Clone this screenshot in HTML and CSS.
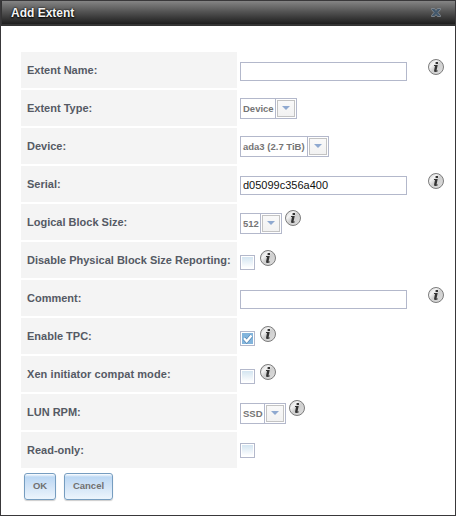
FILE: index.html
```
<!DOCTYPE html>
<html lang="en">
<head>
<meta charset="utf-8">
<title>Add Extent</title>
<link rel="stylesheet" href="styles.css">
</head>
<body>
<svg width="0" height="0" class="defs" aria-hidden="true">
  <defs>
    <linearGradient id="disc" x1="0" y1="0" x2="1" y2="1">
      <stop offset="0" stop-color="#bdbdbd"/><stop offset=".3" stop-color="#f4f4f4"/><stop offset=".5" stop-color="#cfcfcf"/><stop offset="1" stop-color="#dedede"/>
    </linearGradient>
    <symbol id="info" viewBox="0 0 16 16">
      <circle cx="8" cy="8" r="7.5" fill="url(#disc)" stroke="#7c7c7c" stroke-width="1"/>
      <rect x="7.6" y="3" width="2.4" height="2" fill="#333"/>
      <path d="M6 6h3.7L8.5 11.4h1.3v.8Q8.700 13 7.300 13 5.700 13 6.100 11.400L7 7.100H6z" fill="#333"/>
    </symbol>
  </defs>
</svg>
<div class="dialog">
  <header class="titlebar">
    <h1>Add Extent</h1>
    <svg class="close" viewBox="0 0 10 9"><path d="M.5.5h3L5 2.400 6.500.5h3v1L7 4.500l2.500 3v1h-3L5 6.600 3.500 8.500h-3v-1L3 4.500.5 1.500z" fill="#43586c" stroke="#8a8f96" stroke-width=".8"/></svg>
  </header>
  <form class="form">
    <div class="row"><label>Extent Name:</label><div class="field text"><input type="text"><svg class="info"><use href="#info"/></svg></div></div>
    <div class="row"><label>Extent Type:</label><div class="field choice"><div class="select device"><span>Device</span><i></i></div></div></div>
    <div class="row"><label>Device:</label><div class="field choice"><div class="select disk"><span>ada3 (2.7 TiB)</span><i></i></div></div></div>
    <div class="row"><label>Serial:</label><div class="field text"><input type="text" value="d05099c356a400"><svg class="info"><use href="#info"/></svg></div></div>
    <div class="row"><label>Logical Block Size:</label><div class="field choice hinted"><div class="select block"><span>512</span><i></i></div><svg class="info"><use href="#info"/></svg></div></div>
    <div class="row"><label>Disable Physical Block Size Reporting:</label><div class="field check"><div class="box"><b></b></div><svg class="info"><use href="#info"/></svg></div></div>
    <div class="row"><label>Comment:</label><div class="field text"><input type="text"><svg class="info"><use href="#info"/></svg></div></div>
    <div class="row"><label>Enable TPC:</label><div class="field check"><div class="box checked"><b><svg viewBox="0 0 11 11"><path d="M2 5.300l2.700 3L9.500 2.500" fill="none" stroke="#5587b5" stroke-width="3.600"/><path d="M2 5.300l2.700 3L9.500 2.500" fill="none" stroke="#fff" stroke-width="2.300"/></svg></b></div><svg class="info"><use href="#info"/></svg></div></div>
    <div class="row"><label class="wide">Xen initiator compat mode:</label><div class="field check"><div class="box"><b></b></div><svg class="info"><use href="#info"/></svg></div></div>
    <div class="row"><label>LUN RPM:</label><div class="field choice hinted"><div class="select rpm"><span>SSD</span><i></i></div><svg class="info"><use href="#info"/></svg></div></div>
    <div class="row"><label>Read-only:</label><div class="field check plain"><div class="box"><b></b></div></div></div>
    <div class="actions"><button type="button" class="ok">OK</button><button type="button" class="cancel">Cancel</button></div>
  </form>
</div>
</body>
</html>
```
FILE: styles.css
```
* { box-sizing: border-box; }
body { margin: 0; font-family: "Liberation Sans", Arial, sans-serif; font-size: 11px; background: #fff; }
.defs { position: absolute; }
.dialog { width: 456px; height: 516px; border: 1px solid #39383a; background: #fff; }
.titlebar {
  height: 25px; padding: 0 14px 0 9px; border: solid #343434; border-width: 0 0 2px 1px;
  display: flex; align-items: center; justify-content: space-between;
  background: linear-gradient(#858585, #555 45%, #1e1e1e);
}
.titlebar h1 { margin: 0; font-size: 12px; line-height: 14px; color: #f4f4f4; text-shadow: 0 1px 2px #000, 0 0 2px #000; }
.close { width: 10px; height: 9px; }
.form { padding: 26px 0 0 20px; }
.row { display: grid; grid-template-columns: 216px 207px; column-gap: 3px; height: 36px; margin-bottom: 2px; }
.row label { padding-left: 6px; line-height: 36px; background: #f4f4f4; color: #555a64; font-weight: bold; white-space: nowrap; }
.row .wide { letter-spacing: .07px; }
.field { display: flex; align-items: flex-start; }
.info { width: 16px; height: 16px; flex: none; }
.text { padding-top: 7px; gap: 21px; }
.text input {
  width: 167px; height: 19px; margin: 3px 0 0; padding: 0 2px 2px; border: 1px solid #b3b8cb;
  font: 11px "Liberation Sans", Arial, sans-serif; color: #111; background: #fff; outline: 0;
}
.choice { padding-top: 8px; }
.hinted { padding-top: 6px; gap: 3px; }
.hinted .select { margin-top: 3px; }
.select { display: flex; height: 21px; border: 1px solid #b3b8cb; color: #757575; font-size: 9.5px; font-weight: bold; }
.select span { flex: 1; padding-left: 2px; line-height: 20px; border-right: 1px solid #b3b8cb; white-space: nowrap; }
.select i {
  width: 18px; height: 17px; margin: 1px; border: 1px solid #c3c3c3; flex: none;
  display: flex; align-items: flex-start; justify-content: center; padding-top: 5px; background: linear-gradient(#f9f9f9, #f2f2f2);
}
.select i::before { content: ""; border: 4px solid transparent; border-top-color: #8fa9d0; border-bottom: 0; }
.device { width: 57px; }
.disk { width: 89px; }
.block { width: 42px; }
.rpm { width: 46px; }
.check { padding-top: 8px; gap: 5px; }
.box { width: 15px; height: 15px; margin-top: 5px; padding: 1px; border: 1px solid #b3b8cb; flex: none; }
.box b { display: block; width: 11px; height: 11px; background: linear-gradient(#d4e5f1, #fff); }
.box svg { display: block; width: 11px; height: 11px; }
.checked b { background: #82b4dc; }
.plain .box { margin-top: 3px; }
.actions { display: flex; gap: 8px; padding: 3px 0 0 3px; }
.actions button {
  height: 27px; padding: 0 0 2px; border: 1px solid #769dc0; border-radius: 3px;
  font: bold 9.5px "Liberation Sans", Arial, sans-serif; color: #707070;
  background: linear-gradient(#fff 0, #bcd8f4 3px, #cfe2f6 45%, #edf5fd); box-shadow: 0 1px 1px rgba(0, 0, 0, .2);
}
.ok { width: 32px; }
.cancel { width: 49px; }
```
